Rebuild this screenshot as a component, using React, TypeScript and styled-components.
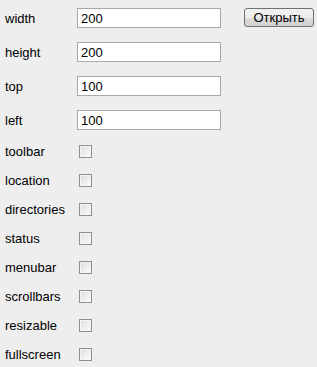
import React from "react";
import styled, { createGlobalStyle } from "styled-components";

const GlobalStyle = createGlobalStyle`
  html, body {
    margin: 0;
    padding: 0;
    background: #eeeeee;
  }
  body {
    font-family: "Liberation Sans", Arial, sans-serif;
    font-size: 13px;
    color: #000;
  }
`;

const Form = styled.form`
  padding: 1px 0 0 5px;
  width: 317px;
  height: 367px;
  box-sizing: border-box;
`;

const Row = styled.div<{ $tall?: boolean }>`
  display: flex;
  align-items: center;
  height: ${(p) => (p.$tall ? 34 : 29)}px;
`;

const Label = styled.label`
  width: 72px;
  flex: none;
`;

const TextInput = styled.input`
  width: 144px;
  height: 20px;
  box-sizing: border-box;
  margin: 0;
  padding: 0 3px;
  border: 1px solid #a9a9a9;
  background: #fff;
  font-family: "Liberation Sans", Arial, sans-serif;
  font-size: 13px;
  color: #000;
  outline: none;
`;

const OpenButton = styled.button`
  margin-left: 23px;
  margin-top: -1px;
  width: 70px;
  height: 19px;
  box-sizing: border-box;
  padding: 0;
  border: 1px solid #707070;
  border-radius: 3px;
  background: linear-gradient(#f2f2f2 0%, #ebebeb 50%, #dddddd 51%, #cfcfcf 100%);
  font-family: "Liberation Sans", Arial, sans-serif;
  font-size: 13px;
  color: #000;
  line-height: 17px;
`;

const Check = styled.input.attrs({ type: "checkbox" })`
  appearance: none;
  margin: 0 0 0 2px;
  width: 13px;
  height: 13px;
  box-sizing: border-box;
  border: 1px solid #8e8f8f;
  background: linear-gradient(135deg, #dcdcdc 0%, #f0f0f0 60%, #ffffff 100%);
  box-shadow: inset 0 0 0 1px #f4f4f4;
`;

const sizeFields = [
  { name: "width", value: "200" },
  { name: "height", value: "200" },
  { name: "top", value: "100" },
  { name: "left", value: "100" },
];

const flags = ["toolbar", "location", "directories", "status", "menubar", "scrollbars", "resizable", "fullscreen"];

export default function App() {
  return (
    <>
      <GlobalStyle />
      <Form onSubmit={(e) => e.preventDefault()}>
        {sizeFields.map((f, i) => (
          <Row $tall key={f.name}>
            <Label htmlFor={f.name}>{f.name}</Label>
            <TextInput id={f.name} defaultValue={f.value} />
            {i === 0 && <OpenButton type="button">Открыть</OpenButton>}
          </Row>
        ))}
        {flags.map((name) => (
          <Row key={name}>
            <Label htmlFor={name}>{name}</Label>
            <Check id={name} />
          </Row>
        ))}
      </Form>
    </>
  );
}
